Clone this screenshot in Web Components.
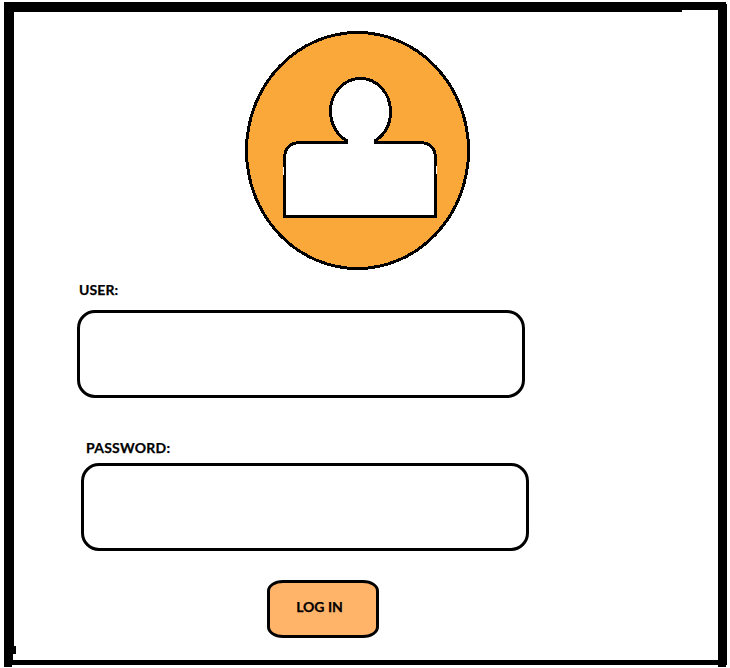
<!DOCTYPE html>
<html lang="en">
<head>
<meta charset="utf-8">
<title>Log in</title>
<style>
html, body { margin: 0; background: #fff; }
body { width: 730px; height: 668px; overflow: hidden; font-family: Lato, "Open Sans", sans-serif; color: #000; }
</style>
</head>
<body>
<login-screen></login-screen>
<script>
const define = (name, html, setup) => {
  const template = document.createElement('template');
  template.innerHTML = html;
  customElements.define(name, class extends HTMLElement {
    constructor() {
      super();
      this.attachShadow({ mode: 'open' }).append(template.content.cloneNode(true));
    }
    connectedCallback() { if (setup) setup(this); }
  });
};

define('window-frame', `
  <style>
    :host { display: grid; width: 730px; height: 668px; }
    svg, .content { grid-area: 1 / 1; }
    svg { display: block; }
  </style>
  <svg width="730" height="668" shape-rendering="crispEdges" aria-hidden="true">
    <path d="M4 2H726V4H727V665H726V667H718V665H12V667H4ZM14 12V646H16V654H13V660H718V10H682V12Z" fill-rule="evenodd"/>
  </svg>
  <div class="content"><slot></slot></div>`);

define('user-avatar', `
  <style>:host { display: block; width: 225px; height: 239px; } svg { display: block; }</style>
  <svg width="225" height="239" viewBox="245 31 225 239" stroke="#000" stroke-width="3" shape-rendering="crispEdges" role="img" aria-label="User">
    <ellipse cx="357.5" cy="150.5" rx="111" ry="118" fill="#faa83a"/>
    <path d="M346.500 142.500H300.500Q284.500 143 284.500 159V216.500H435.500V159Q435.500 143 419.500 142.500H375.500V140.500C384 135 390.500 125 390.500 111.500C390.500 93 377 78.500 360.500 78.500C344 78.500 330.500 93 330.500 111.500C330.500 125 338 136 346.500 140.500Z" fill="#fff" stroke="none"/>
    <path d="M346.500 142.500H300.500Q284.500 143 284.500 159V216.500H435.500V159Q435.500 143 419.500 142.500H375.500V140.500C384 135 390.500 125 390.500 111.500C390.500 93 377 78.500 360.500 78.500C344 78.500 330.500 93 330.500 111.500C330.500 125 338 136 346.500 140.500V144" fill="none"/>
    <path d="M283.500 167V175M436.500 166V174" stroke="#fff" stroke-width="1"/>
  </svg>`);

define('form-field', `
  <style>
    :host { display: block; width: 448px; }
    label { display: block; height: 20px; margin: 0 0 var(--gap) var(--indent); font: 700 14px/20px Lato, "Open Sans", sans-serif; letter-spacing: var(--track, 0); -webkit-text-stroke: .25px #000; white-space: nowrap; }
    input { display: block; box-sizing: border-box; width: 448px; height: 88px; margin: 0; padding: 0 18px; border: 3px solid #000; border-radius: 18px; background: #fff; outline: 0; font: 18px Lato, sans-serif; }
  </style>
  <label for="field"><slot></slot></label>
  <input id="field">`, host => {
    host.shadowRoot.querySelector('input').type = host.getAttribute('type') || 'text';
  });

define('login-button', `
  <style>
    :host { display: block; width: 112px; height: 58px; }
    button { display: block; box-sizing: border-box; width: 112px; height: 58px; margin: 0; padding: 0 7px 4px 0; border: 3px solid #000; border-radius: 16px / 11px; background: #ffb46a; color: #000; font: 700 14px/20px Lato, "Open Sans", sans-serif; -webkit-text-stroke: .25px #000; }
  </style>
  <button type="button"><slot></slot></button>`);

define('login-screen', `
  <style>
    :host { display: block; }
    .stack { display: flex; flex-direction: column; align-items: flex-start; padding-top: 31px; }
    user-avatar { margin-left: 245px; }
    .user { margin: 10px 0 0 77px; --gap: 10px; --indent: 2px; --track: .1px; }
    .password { margin: 40px 0 0 81px; --gap: 5px; --indent: 5px; --track: .25px; }
    login-button { margin: 29px 0 0 267px; }
  </style>
  <window-frame>
    <div class="stack">
      <user-avatar></user-avatar>
      <form-field class="user">USER:</form-field>
      <form-field class="password" type="password">PASSWORD:</form-field>
      <login-button>LOG IN</login-button>
    </div>
  </window-frame>`);
</script>
</body>
</html>
